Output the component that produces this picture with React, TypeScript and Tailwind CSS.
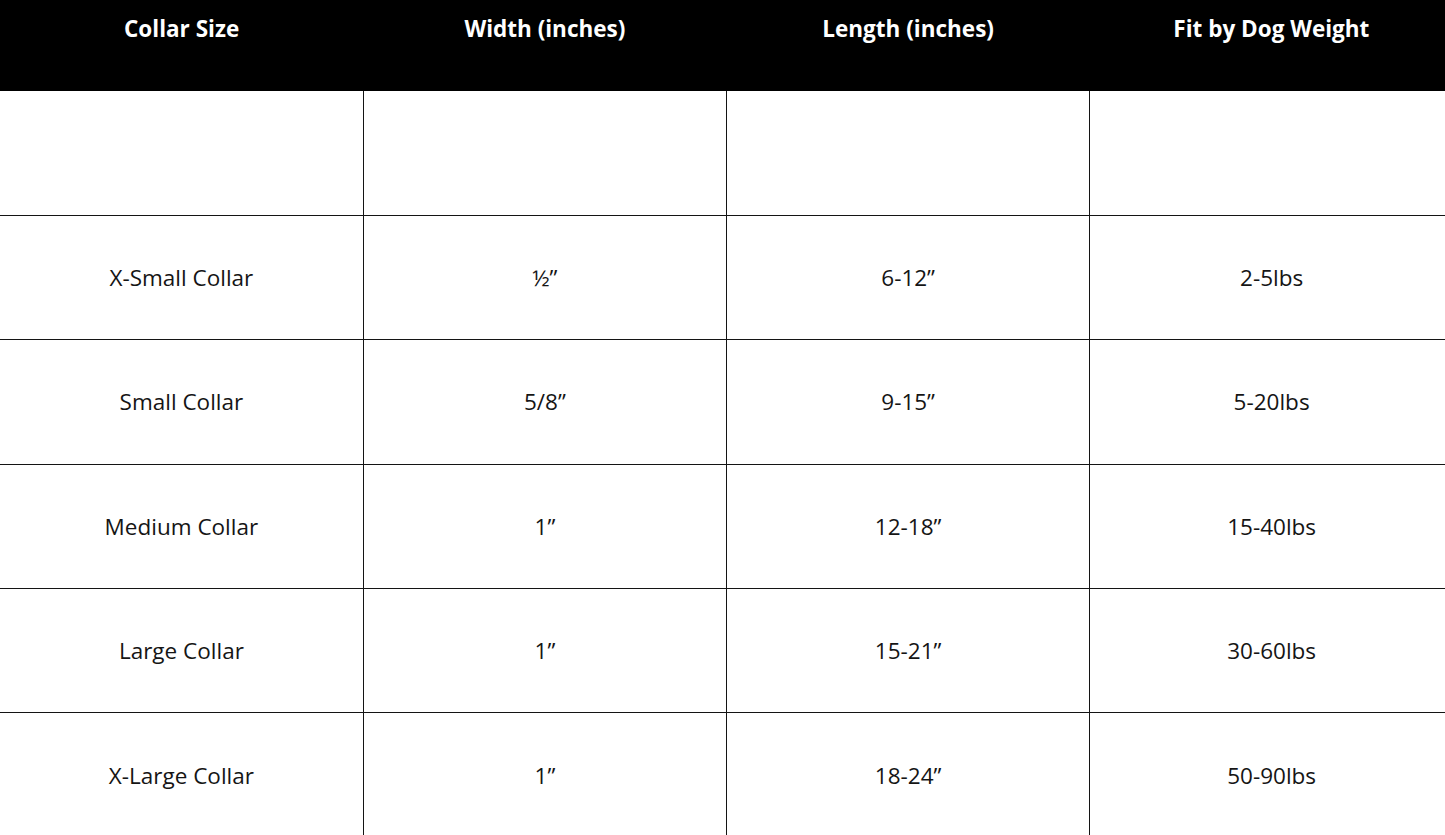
const headers = ['Collar Size', 'Width (inches)', 'Length (inches)', 'Fit by Dog Weight'];

const rows: string[][] = [
  ['', '', '', ''],
  ['X-Small Collar', '½”', '6-12”', '2-5lbs'],
  ['Small Collar', '5/8”', '9-15”', '5-20lbs'],
  ['Medium Collar', '1”', '12-18”', '15-40lbs'],
  ['Large Collar', '1”', '15-21”', '30-60lbs'],
  ['X-Large Collar', '1”', '18-24”', '50-90lbs'],
];

export default function App() {
  return (
    <div className="min-h-screen overflow-hidden bg-white" style={{ fontFamily: '"Open Sans", "Noto Sans", sans-serif' }}>
      <table className="w-[1453px] table-fixed border-collapse">
        <thead>
          <tr className="h-[91px] bg-black">
            {headers.map((h) => (
              <th key={h} className="align-top pt-[13px] text-center text-[22.5px] font-bold leading-[31px] text-white">
                {h}
              </th>
            ))}
          </tr>
        </thead>
        <tbody>
          {rows.map((r, i) => (
            <tr key={i} className="h-[124.4px] border-b border-[#141414]">
              {r.map((c, j) => (
                <td
                  key={j}
                  className={`text-center align-middle text-[22.5px] leading-[31px] text-[#151515] ${j > 0 ? 'border-l border-[#141414]' : ''}`}
                >
                  {c}
                </td>
              ))}
            </tr>
          ))}
        </tbody>
      </table>
    </div>
  );
}
